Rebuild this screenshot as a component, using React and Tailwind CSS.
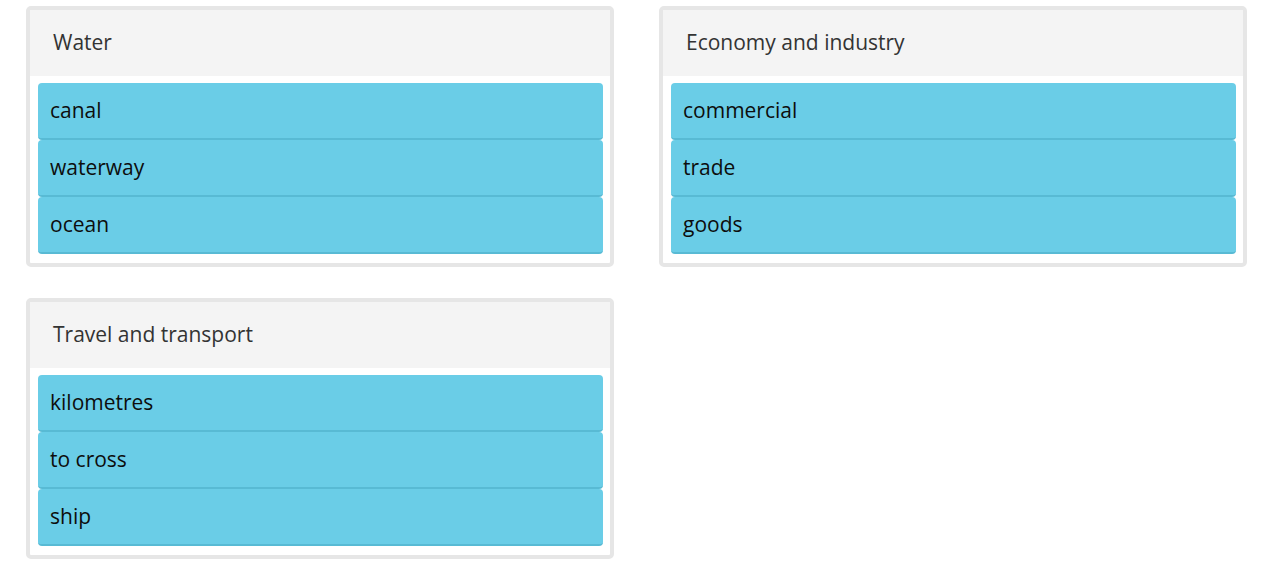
import React from "react";

const groups = [
  { title: "Water", items: ["canal", "waterway", "ocean"] },
  { title: "Economy and industry", items: ["commercial", "trade", "goods"] },
  { title: "Travel and transport", items: ["kilometres", "to cross", "ship"] },
];

function Group({ title, items }) {
  return (
    <div className="rounded-[5px] border-4 border-[#e6e6e6] bg-white">
      <div className="flex h-[66px] items-center bg-[#f4f4f4] px-[23px] text-[21px] text-[#333]">
        {title}
      </div>
      <div className="pt-[7px] pl-[8px] pr-[7px] pb-[9px]">
        {items.map((item) => (
          <div
            key={item}
            className="flex h-[57px] items-center rounded-[4px] border-b-2 border-[#58bad4] bg-[#6acde7] px-3 text-[21px] text-[#0d0d0d]"
          >
            {item}
          </div>
        ))}
      </div>
    </div>
  );
}

export default function App() {
  return (
    <div
      className="min-h-screen bg-white pl-[26px] pt-[6px]"
      style={{ fontFamily: '"Open Sans", sans-serif' }}
    >
      <div className="grid w-[1221px] grid-cols-2 gap-x-[45px] gap-y-[31px]">
        {groups.map((g) => (
          <Group key={g.title} title={g.title} items={g.items} />
        ))}
      </div>
    </div>
  );
}
